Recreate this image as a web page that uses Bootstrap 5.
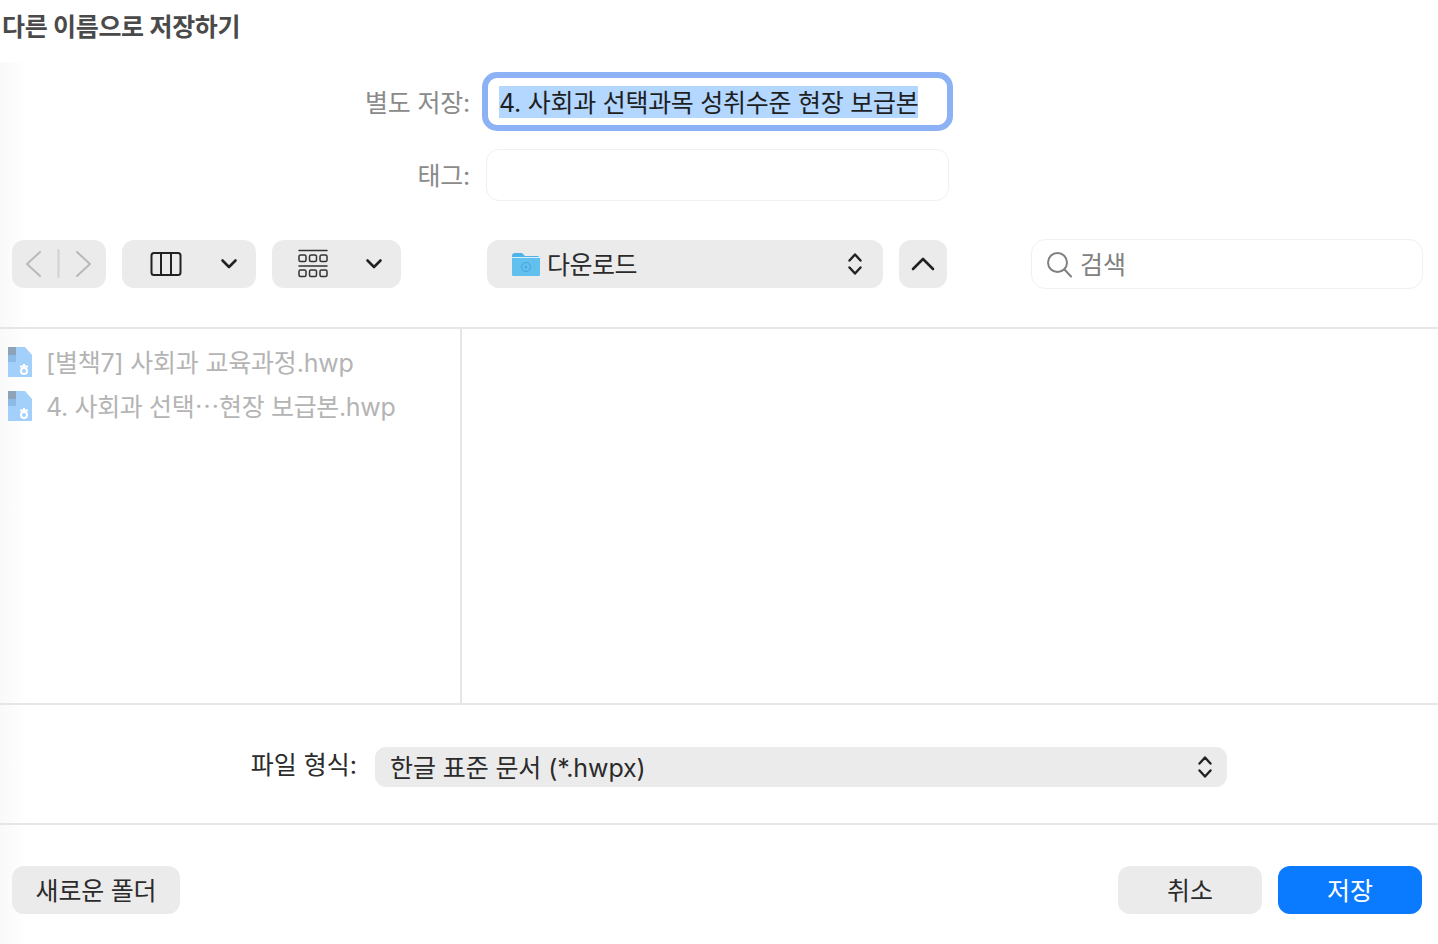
<!DOCTYPE html>
<html lang="ko">
<head>
  <meta charset="UTF-8" />
  <meta name="viewport" content="width=device-width, initial-scale=1.0" />
  <title>다른 이름으로 저장하기</title>
  <link href="https://cdn.jsdelivr.net/npm/bootstrap@5.3.0/dist/css/bootstrap.min.css" rel="stylesheet">
  <style>
    body {
      background-color: #fff;
      font-family: Inter, "Noto Sans CJK KR", sans-serif;
      font-size: 25px;
      line-height: 1.2;
      color: #2b2b2b;
      height: 944px;
      overflow: hidden;
    }
    .dlg-title { height: 62px; padding: 12px 0 0 2px; font-weight: 700; color: #4a4a4a; letter-spacing: -.3px; }
    .dlg-body { background: linear-gradient(to right, #f9f9f9, #fff 26px); }
    .form-area { height: 178px; padding-top: 10px; }
    .form-label-cell { width: 470px; padding-top: 2px; text-align: right; color: #8a8a8a; letter-spacing: -.2px; }
    .name-field { width: 471px; height: 59px; margin-left: 12px; padding: 0 0 0 11px; background: #fff; border: 6px solid #8cb2f5; border-radius: 15px; color: #1f1f1f; }
    .name-field span { background: #b3d7ff; display: inline-block; height: 32px; line-height: 34px; white-space: nowrap; letter-spacing: -.27px; }
    .tag-row { margin-top: 18px; }
    .tag-field { width: 463px; height: 52px; margin-left: 16px; background: #fff; border: 1px solid #f0f0f0; border-radius: 13px; }
    .tool-row { height: 87px; align-items: flex-start; padding-left: 12px; }
    .tool-btn { height: 48px; background: #ebebeb; border-radius: 12px; flex-shrink: 0; }
    .nav-pair { width: 94px; }
    .col-pick { width: 134px; margin-left: 16px; }
    .grid-pick { width: 129px; margin-left: 16px; }
    .path-pick { width: 396px; margin-left: 86px; }
    .path-name { margin-left: 6px; padding-top: 2px; letter-spacing: -.5px; }
    .path-step { margin-right: 20px; }
    .up-btn { width: 48px; margin-left: 16px; }
    .search-box { width: 392px; height: 50px; margin: -1px 0 0 84px; padding-left: 14px; border: 1px solid #f0f0f0; border-radius: 14px; color: #808080; background: #fff; }
    .search-box span { padding-top: 2px; }
    .hair { height: 2px; background: #e6e6e6; }
    .browser-pane { height: 374px; }
    .side-list { width: 462px; border-right: 2px solid #e6e6e6; padding: 11px 0 0 6px; color: #b4b4b4; }
    .side-item { height: 44px; gap: 12px; white-space: nowrap; letter-spacing: -.2px; }
    .side-item span { padding-top: 2px; }
    .side-item .tight { letter-spacing: -.35px; }
    .format-row { height: 118px; padding-top: 42px; }
    .format-select { width: 852px; height: 40px; margin-left: 18px; padding: 0 14px 0 15px; background: #ebebeb; border-radius: 11px; letter-spacing: -.1px; }
    .format-select span { padding-top: 2px; }
    .format-label { width: 357px; text-align: right; margin-top: 3px; }
    .foot-row { height: 119px; padding: 41px 16px 0 12px; }
    .foot-btn { height: 48px; width: 144px; padding-top: 2px; background: #ebebeb; border-radius: 12px; color: #2b2b2b; }
    .foot-btn.wide { width: 168px; letter-spacing: -.2px; }
    .foot-btn.go { background: #0a7aff; color: #fff; }
  </style>
</head>
<body>
  <div class="dlg-title">다른 이름으로 저장하기</div>
  <div class="dlg-body">
    <div class="form-area">
      <div class="d-flex align-items-center">
        <div class="form-label-cell">별도 저장:</div>
        <div class="name-field d-flex align-items-center"><span>4. 사회과 선택과목 성취수준 현장 보급본</span></div>
      </div>
      <div class="tag-row d-flex align-items-center">
        <div class="form-label-cell">태그:</div>
        <div class="tag-field"></div>
      </div>
    </div>

    <div class="tool-row d-flex">
      <div class="tool-btn nav-pair d-flex align-items-center justify-content-center">
        <svg width="94" height="48" viewBox="0 0 94 48" fill="none" stroke="#b9b9b9" stroke-width="2" stroke-linecap="round" stroke-linejoin="round"><path d="M28 12 15 24l13 12M65 12l13 12-13 12"/><path d="M46.500 10v27" stroke="#d2d2d2"/></svg>
      </div>
      <div class="tool-btn col-pick d-flex align-items-center">
        <svg width="134" height="48" viewBox="0 0 134 48" fill="none" stroke="#222" stroke-width="2" stroke-linecap="round" stroke-linejoin="round"><rect x="29.500" y="13" width="29" height="22" rx="2.500"/><path d="M39 13.500v21M49 13.500v21"/><path d="m100.500 20.500 6.500 6.500 6.500-6.500" stroke-width="2.600"/></svg>
      </div>
      <div class="tool-btn grid-pick d-flex align-items-center">
        <svg width="129" height="48" viewBox="0 0 129 48" fill="none" stroke="#333" stroke-linecap="round" stroke-linejoin="round"><path d="M27 10.500h28M27 26h28" stroke-width="1.500"/><g stroke-width="1.500"><rect x="27" y="15" width="7" height="6.500" rx="1.500"/><rect x="37.500" y="15" width="7" height="6.500" rx="1.500"/><rect x="48" y="15" width="7" height="6.500" rx="1.500"/><rect x="27" y="30" width="7" height="6.500" rx="1.500"/><rect x="37.500" y="30" width="7" height="6.500" rx="1.500"/><rect x="48" y="30" width="7" height="6.500" rx="1.500"/></g><path d="m95.500 20.500 6.500 6.500 6.500-6.500" stroke="#222" stroke-width="2.600"/></svg>
      </div>
      <div class="tool-btn path-pick d-flex align-items-center">
        <svg class="ms-4 flex-shrink-0" width="30" height="26" viewBox="0 0 30 26"><path d="M1 5a3 3 0 0 1 3-3h7l3 3h12a3 3 0 0 1 3 3v15a2 2 0 0 1-2 2H3a2 2 0 0 1-2-2z" fill="#4fb3e8"/><rect x="1" y="7" width="28" height="18" rx="2" fill="#62c0ee"/><path d="M1 6.500h28" stroke="#d5effb" stroke-width="1"/><circle cx="15" cy="16" r="4.500" fill="none" stroke="#45a5dc"/><circle cx="15" cy="16" r="1.300" fill="#45a5dc"/></svg>
        <span class="path-name">다운로드</span>
        <svg class="path-step ms-auto" width="16" height="26" viewBox="0 0 16 26" fill="none" stroke="#222" stroke-width="2.400" stroke-linecap="round" stroke-linejoin="round"><path d="m2.500 9.500 5.500-6 5.500 6M2.500 16.500l5.500 6 5.500-6"/></svg>
      </div>
      <div class="tool-btn up-btn d-flex align-items-center justify-content-center">
        <svg width="26" height="16" viewBox="0 0 26 16" fill="none" stroke="#222" stroke-width="2.600" stroke-linecap="round" stroke-linejoin="round"><path d="m3 13 10-10 10 10"/></svg>
      </div>
      <div class="search-box d-flex align-items-center gap-2">
        <svg width="26" height="28" viewBox="0 0 26 28" fill="none" stroke="#808080" stroke-width="2" stroke-linecap="round"><circle cx="11.500" cy="12.500" r="9.500"/><path d="m18.500 19.500 6.500 7"/></svg>
        <span>검색</span>
      </div>
    </div>

    <div class="hair"></div>
    <div class="browser-pane d-flex">
      <div class="side-list">
        <div class="side-item d-flex align-items-center">
          <svg width="28" height="32" viewBox="0 0 28 32" class="flex-shrink-0"><path d="M2 1h17l7 8v22H2z" fill="#a3d0fb"/><rect x="2" y="1" width="8" height="8" fill="#8fa3b8"/><rect x="2" y="9" width="8" height="7" fill="#8dbbe8"/><circle cx="18" cy="25" r="3" fill="none" stroke="#fff" stroke-width="2"/><path d="M14 20.500h8M18 18v2" stroke="#fff" stroke-width="2"/></svg>
          <span>[별책7] 사회과 교육과정.hwp</span>
        </div>
        <div class="side-item d-flex align-items-center">
          <svg width="28" height="32" viewBox="0 0 28 32" class="flex-shrink-0"><path d="M2 1h17l7 8v22H2z" fill="#a3d0fb"/><rect x="2" y="1" width="8" height="8" fill="#8fa3b8"/><rect x="2" y="9" width="8" height="7" fill="#8dbbe8"/><circle cx="18" cy="25" r="3" fill="none" stroke="#fff" stroke-width="2"/><path d="M14 20.500h8M18 18v2" stroke="#fff" stroke-width="2"/></svg>
          <span class="tight">4. 사회과 선택⋯현장 보급본.hwp</span>
        </div>
      </div>
    </div>
    <div class="hair"></div>

    <div class="format-row d-flex align-items-start">
      <div class="format-label">파일 형식:</div>
      <div class="format-select d-flex align-items-center justify-content-between">
        <span>한글 표준 문서 (*.hwpx)</span>
        <svg width="16" height="26" viewBox="0 0 16 26" fill="none" stroke="#222" stroke-width="2.400" stroke-linecap="round" stroke-linejoin="round"><path d="m2.500 9.500 5.500-6 5.500 6M2.500 16.500l5.500 6 5.500-6"/></svg>
      </div>
    </div>
    <div class="hair"></div>

    <div class="foot-row d-flex align-items-start">
      <div class="foot-btn wide d-flex align-items-center justify-content-center">새로운 폴더</div>
      <div class="foot-btn d-flex align-items-center justify-content-center ms-auto">취소</div>
      <div class="foot-btn go d-flex align-items-center justify-content-center ms-3">저장</div>
    </div>
  </div>
  <script src="https://cdn.jsdelivr.net/npm/bootstrap@5.3.0/dist/js/bootstrap.bundle.min.js"></script>
</body>
</html>
